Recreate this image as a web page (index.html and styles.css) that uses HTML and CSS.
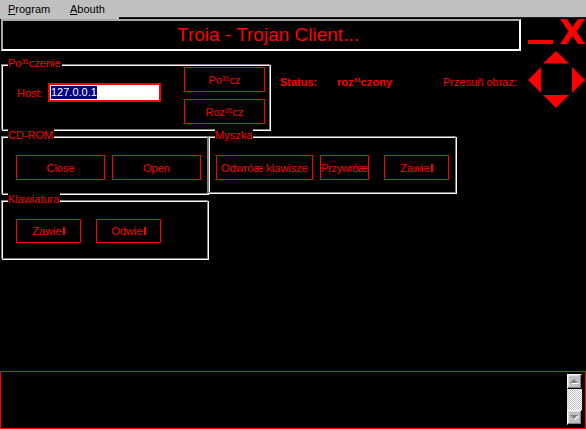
FILE: index.html
```html
<!DOCTYPE html>
<html>
<head>
<meta charset="utf-8">
<link rel="stylesheet" href="styles.css">
</head>
<body>
<div class="menubar">
  <div class="menu-items">
    <span class="menu-item m1"><u>P</u>rogram</span>
    <span class="menu-item m2"><u>A</u>bouth</span>
  </div>
  <div class="menu-rest"></div>
</div>

<div class="title-row">
  <div class="title-box">Troia - Trojan Client...</div>
  <div class="minimize"></div>
  <svg class="close" width="25" height="25" viewBox="0 0 25 25">
    <polygon fill="#ff0000" points="0,0 7,0 12.5,8 18,0 25,0 16.5,12.5 25,25 18,25 12.5,17 7,25 0,25 8.5,12.5"/>
  </svg>
</div>

<div class="row1">
  <div class="group g-conn">
    <span class="legend">Po³¹czenie</span>
    <div class="host-row">
      <span class="host-label">Host:</span>
      <div class="input"><span class="sel">127.0.0.1</span></div>
    </div>
    <div class="btn-col">
      <div class="btn w81">Po³¹cz</div>
      <div class="btn w81">Roz³¹cz</div>
    </div>
  </div>
  <div class="status"><span class="st-label">Status:</span><span class="st-value">roz³¹czony</span></div>
  <div class="shift-label">Przesuñ obraz:</div>
  <svg class="pad" width="57" height="57" viewBox="0 0 57 57">
    <polygon fill="#ff0000" points="28,0 41,12.5 15,12.5"/>
    <polygon fill="#ff0000" points="0,29 13,16 13,42"/>
    <polygon fill="#ff0000" points="57,29 44,16 44,42"/>
    <polygon fill="#ff0000" points="28,57 41,44 15,44"/>
  </svg>
</div>

<div class="row2">
  <div class="group g-cd">
    <span class="legend">CD-ROM</span>
    <div class="btn w89">Close</div>
    <div class="btn w89">Open</div>
  </div>
  <div class="group g-mouse">
    <span class="legend">Myszka</span>
    <div class="btn w97">Odwróæ klawisze</div>
    <div class="btn w49 tight">Przywróæ</div>
    <div class="btn w65 gap15">Zawie<span class="bar"></span></div>
  </div>
</div>

<div class="row3">
  <div class="group g-kb">
    <span class="legend">Klawiatura</span>
    <div class="btn w65 h24">Zawie<span class="bar"></span></div>
    <div class="btn w65 h24 gap15">Odwie<span class="bar"></span></div>
  </div>
</div>

<div class="memo">
  <div class="scroll">
    <div class="sb-btn">
      <svg width="9" height="6" viewBox="0 0 9 6"><polygon fill="#ffffff" points="5,1 9,5 1,5"/><polygon fill="#808080" points="4,0 8,4 0,4"/></svg>
    </div>
    <div class="sb-track"></div>
    <div class="sb-btn">
      <svg width="9" height="6" viewBox="0 0 9 6"><polygon fill="#ffffff" points="1,1 9,1 5,5"/><polygon fill="#808080" points="0,0 8,0 4,4"/></svg>
    </div>
  </div>
</div>
</body>
</html>
```

FILE: styles.css
```css
html, body {
  margin: 0;
  padding: 0;
}
body {
  width: 586px;
  height: 429px;
  overflow: hidden;
  background: #000;
  color: #ff0000;
  font-family: "Liberation Sans", Arial, sans-serif;
  font-size: 11px;
  display: flex;
  flex-direction: column;
}

/* menu */
.menubar {
  display: flex;
  height: 19px;
  background: #c0c0c0;
  flex-shrink: 0;
}
.menu-items {
  width: 119px;
  display: flex;
}
.menu-item {
  color: #000;
  line-height: 18px;
  box-sizing: border-box;
  padding-left: 8px;
}
.m1 { width: 62px; }
.menu-rest {
  flex: 1;
  align-self: flex-end;
  height: 2px;
  border-top: 1px solid #202020;
  box-sizing: border-box;
  background: #000;
}

/* title */
.title-row {
  display: flex;
  align-items: flex-start;
  height: 32px;
  flex-shrink: 0;
}
.title-box {
  margin-left: 1px;
  width: 520px;
  height: 32px;
  box-sizing: border-box;
  border: 2px solid;
  border-color: #a8a8a8 #ffffff #ffffff #a8a8a8;
  font-size: 19px;
  line-height: 28px;
  text-align: center;
  padding-left: 14px;
}
.minimize {
  margin-left: 7px;
  margin-top: 21px;
  width: 25px;
  height: 4px;
  background: #ff0000;
}
.close {
  margin-left: 7px;
  display: block;
}

/* groups */
.group {
  position: relative;
  box-sizing: border-box;
  border: 1px solid #808080;
  box-shadow: inset 1px 1px 0 #ffffff, 1px 1px 0 #ffffff;
  display: flex;
  align-items: flex-start;
}
.legend {
  position: absolute;
  left: 6px;
  top: -8px;
  background: #000;
  line-height: 13px;
  padding-right: 1px;
}

.btn {
  box-sizing: border-box;
  border: 1px solid #ff0000;
  height: 25px;
  display: flex;
  align-items: center;
  justify-content: center;
  white-space: nowrap;
}
.w81 { width: 81px; }
.w89 { width: 89px; }
.w97 { width: 97px; }
.w49 { width: 49px; }
.w65 { width: 65px; }
.h24 { height: 24px; }
.gap15 { margin-left: 15px; }
.tight { letter-spacing: -0.4px; }
.bar {
  display: inline-block;
  width: 2px;
  height: 8px;
  background: #ff0000;
  margin-left: 1px;
}

/* row 1 */
.row1 {
  display: flex;
  align-items: flex-start;
  flex-shrink: 0;
}
.g-conn {
  margin-left: 1px;
  margin-top: 13px;
  width: 269px;
  height: 66px;
  padding: 2px 0 0 15px;
}
.host-row {
  display: flex;
  align-items: center;
  margin-top: 16px;
}
.host-label {
  width: 24px;
  margin-right: 7px;
}
.input {
  width: 113px;
  height: 19px;
  box-sizing: border-box;
  border: 2px solid #ff0000;
  background: #fff;
  padding-left: 1px;
  display: flex;
  align-items: center;
}
.sel {
  background: #000080;
  color: #fff;
  line-height: 13px;
}
.btn-col {
  margin-left: 23px;
  display: flex;
  flex-direction: column;
  gap: 7px;
}
.status {
  margin-left: 10px;
  margin-top: 25px;
  font-weight: bold;
  white-space: nowrap;
}
.st-label {
  display: inline-block;
  width: 57px;
}
.shift-label {
  margin-left: auto;
  margin-top: 25px;
  margin-right: 11px;
  white-space: nowrap;
}
.pad {
  display: block;
  margin-right: 1px;
}

/* row 2 */
.row2 {
  display: flex;
  align-items: flex-start;
  margin-top: 6px;
  flex-shrink: 0;
}
.g-cd {
  margin-left: 1px;
  width: 207px;
  height: 58px;
  padding: 18px 0 0 14px;
  gap: 7px;
}
.g-mouse {
  width: 248px;
  height: 57px;
  padding: 18px 0 0 7px;
  gap: 7px;
}
.g-mouse .gap15 { margin-left: 8px; }

/* row 3 */
.row3 {
  display: flex;
  margin-top: 6px;
  flex-shrink: 0;
}
.g-kb {
  margin-left: 1px;
  width: 207px;
  height: 59px;
  padding: 18px 0 0 14px;
}

/* memo */
.memo {
  margin-top: auto;
  height: 58px;
  box-sizing: border-box;
  border: 1px solid #ff0000;
  padding: 2px 3px 3px 0;
  display: flex;
  justify-content: flex-end;
  flex-shrink: 0;
}
.scroll {
  width: 15px;
  display: flex;
  flex-direction: column;
}
.sb-btn {
  height: 15px;
  box-sizing: border-box;
  background: #c0c0c0;
  border: 1px solid;
  border-color: #ffffff #000000 #000000 #ffffff;
  box-shadow: inset -1px -1px 0 #808080, inset 1px 1px 0 #dfdfdf;
  display: flex;
  align-items: center;
  justify-content: center;
}
.sb-btn svg { display: block; }
.sb-track {
  flex: 1;
  background: repeating-conic-gradient(#ffffff 0 25%, #c0c0c0 0 50%) 0 0 / 2px 2px;
}
```
